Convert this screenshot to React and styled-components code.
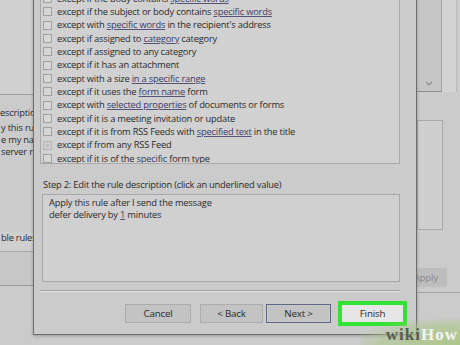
import styled, { createGlobalStyle } from "styled-components";

const GlobalStyle = createGlobalStyle`
  html, body {
    margin: 0;
    padding: 0;
  }
  body {
    width: 460px;
    height: 345px;
    overflow: hidden;
    background: #cbcbcb;
    font-family: "Open Sans", "Noto Sans", sans-serif;
    color: #2a2a2a;
  }
`;

const conditions = [
  ["except if the body contains ", { u: "specific words" }],
  ["except if the subject or body contains ", { u: "specific words" }],
  ["except with ", { u: "specific words" }, " in the recipient's address"],
  ["except if assigned to ", { u: "category" }, " category"],
  ["except if assigned to any category"],
  ["except if it has an attachment"],
  ["except with a size ", { u: "in a specific range" }],
  ["except if it uses the ", { u: "form name" }, " form"],
  ["except with ", { u: "selected properties" }, " of documents or forms"],
  ["except if it is a meeting invitation or update"],
  ["except if it is from RSS Feeds with ", { u: "specified text" }, " in the title"],
  ["except if from any RSS Feed"],
  ["except if it is of the ", { u: "specific" }, " form type"],
];

const App = () => {
  return (
    <>
      <GlobalStyle />
      <Desktop>
        <BackWindow>
          <LeftPane>
            <TopArea />
            <BackLabel>escription</BackLabel>
            <BackLines>
              <BackLine>y this rule after</BackLine>
              <BackLine>e my name</BackLine>
              <BackLine>server replies</BackLine>
            </BackLines>
            <EnableRow>ble rules</EnableRow>
            <ButtonBand />
          </LeftPane>
          <Middle />
          <RightPane>
            <TopRight>
              <ScrollTrack>
                <svg width="8" height="5" viewBox="0 0 8 5">
                  <path d="M1 1 L4 4 L7 1" fill="none" stroke="#8c8c8c" strokeWidth="1.1" />
                </svg>
              </ScrollTrack>
              <Strip />
            </TopRight>
            <SideBox />
            <ApplyButton>Apply</ApplyButton>
            <RightLine />
          </RightPane>
        </BackWindow>

        <Dialog>
          <ListBox>
            {conditions.map((parts, i) => (
              <Row key={i}>
                <Check $greyed={i === 11} />
                <RowText>
                  {parts.map((p, j) =>
                    typeof p === "string" ? p : <Link key={j}>{p.u}</Link>
                  )}
                </RowText>
              </Row>
            ))}
          </ListBox>
          <StepLabel>Step 2: Edit the rule description (click an underlined value)</StepLabel>
          <DescBox>
            <div>Apply this rule after I send the message</div>
            <div>
              defer delivery by <Link>1</Link> minutes
            </div>
          </DescBox>
          <Separator />
          <ButtonRow>
            <Button $w={66}>Cancel</Button>
            <Button $w={63} $ml={9}>&lt; Back</Button>
            <Button $w={65} $ml={3} $default>Next &gt;</Button>
            <FinishButton>Finish</FinishButton>
          </ButtonRow>
        </Dialog>

        <Watermark>
          <Wiki>wiki</Wiki>
          <How>How</How>
        </Watermark>
      </Desktop>
    </>
  );
};

const Desktop = styled.div`
  position: relative;
  width: 460px;
  height: 345px;
  overflow: hidden;
  background: #cbcbcb;
  font-size: 9.3px;
  letter-spacing: -0.2px;
`;

const BackWindow = styled.div`
  display: flex;
  height: 100%;
`;

const LeftPane = styled.div`
  width: 33px;
  display: flex;
  flex-direction: column;
  overflow: hidden;
  white-space: nowrap;
`;

const TopArea = styled.div`
  height: 94px;
  background: #d0d0d0;
  border-bottom: 1px solid #9d9d9d;
`;

const BackLabel = styled.div`
  margin-top: 12px;
  line-height: 12px;
  height: 12px;
`;

const BackLines = styled.div`
  margin-top: 3px;
  padding-left: 1px;
  line-height: 12px;
  height: 118px;
`;

const BackLine = styled.div`
  height: 12px;
`;

const EnableRow = styled.div`
  line-height: 12px;
  height: 12px;
  margin-top: -8px;
  padding-left: 1px;
  padding-bottom: 7px;
  border-bottom: 1px solid #a9a9a9;
  background: #cfcfcf;
`;

const ButtonBand = styled.div`
  height: 33px;
  background: #c7c7c7;
  border-bottom: 1px solid #9a9a9a;
`;

const Middle = styled.div`
  flex: 1;
`;

const RightPane = styled.div`
  width: 43px;
  display: flex;
  flex-direction: column;
`;

const TopRight = styled.div`
  display: flex;
  height: 92px;
`;

const ScrollTrack = styled.div`
  width: 25px;
  background: #c6c6c6;
  border-right: 1px solid #a3a3a3;
  border-bottom: 1px solid #8e8e8e;
  display: flex;
  align-items: flex-end;
  justify-content: center;
  padding-bottom: 5px;
  box-sizing: border-box;
`;

const Strip = styled.div`
  flex: 1;
  background: #d3d3d3;
  border-right: 1px solid #bdbdbd;
  margin-right: 3px;
`;

const SideBox = styled.div`
  margin-top: 28px;
  width: 24px;
  height: 108px;
  border: 1px solid #a9a9a9;
  background: #cfcfcf;
`;

const ApplyButton = styled.div`
  margin-top: 38px;
  width: 30px;
  height: 19px;
  background: #bdbdbd;
  border-radius: 0 2px 2px 0;
  color: #8a8a8a;
  display: flex;
  align-items: center;
  justify-content: flex-end;
  padding-right: 9px;
  box-sizing: border-box;
  overflow: hidden;
  white-space: nowrap;
  font-size: 9.8px;
`;

const RightLine = styled.div`
  margin-top: 5px;
  border-top: 1px solid #a3a3a3;
`;

const Dialog = styled.div`
  position: absolute;
  left: 33px;
  top: -12px;
  width: 384px;
  height: 347px;
  box-sizing: border-box;
  background: #cbcbcb;
  border: 1px solid #6c6c6c;
  border-top: none;
  box-shadow: 0 1px 3px rgba(0, 0, 0, 0.25);
  display: flex;
  flex-direction: column;
  padding: 0 16px 0 6px;
`;

const ListBox = styled.div`
  margin-top: 2px;
  height: 174px;
  box-sizing: border-box;
  border: 1px solid #a9a9a9;
  background: #d1d1d1;
  padding-top: 1px;
  overflow: hidden;
`;

const Row = styled.div`
  display: flex;
  align-items: center;
  height: 13.33px;
  white-space: nowrap;
`;

const Check = styled.span`
  width: 9px;
  height: 9px;
  margin-left: 2px;
  margin-right: 5px;
  box-sizing: border-box;
  border: 1px solid ${(p) => (p.$greyed ? "#b5b5b5" : "#a2a2a2")};
  background: ${(p) => (p.$greyed ? "#cdcdcd" : "#d6d6d6")};
  box-shadow: ${(p) => (p.$greyed ? "inset 0 0 0 2px #cdcdcd, inset 0 0 0 4px #bdbdbd" : "none")};
  flex-shrink: 0;
`;

const RowText = styled.span`
  line-height: 12px;
`;

const Link = styled.span`
  color: #3a3a68;
  text-decoration: underline;
  text-decoration-color: #55557a;
  text-underline-offset: 1px;
`;

const StepLabel = styled.div`
  margin-top: 15px;
  padding-left: 3px;
  line-height: 12px;
  height: 12px;
  white-space: nowrap;
`;

const DescBox = styled.div`
  margin-top: 3px;
  margin-left: 2px;
  height: 88px;
  box-sizing: border-box;
  border: 1px solid #a9a9a9;
  background: #d0d0d0;
  padding: 2px 6px;
  line-height: 12px;
`;

const Separator = styled.div`
  margin-top: 8px;
  border-top: 1px solid #a4a4a4;
  border-bottom: 1px solid #e2e2e2;
`;

const ButtonRow = styled.div`
  margin-top: 12px;
  height: 19px;
  display: flex;
  align-items: center;
  padding-left: 85px;
`;

const Button = styled.div`
  width: ${(p) => p.$w}px;
  margin-left: ${(p) => p.$ml || 0}px;
  flex-shrink: 0;
  height: 19px;
  box-sizing: border-box;
  display: flex;
  align-items: center;
  justify-content: center;
  background: #c3c3c3;
  border: 1px solid ${(p) => (p.$default ? "#5f6883" : "#adadad")};
  box-shadow: ${(p) => (p.$default ? "inset 0 0 0 1px #c9c9cc" : "none")};
  font-size: 9.8px;
  white-space: nowrap;
`;

const FinishButton = styled.div`
  margin-left: 7px;
  width: 69px;
  height: 25px;
  box-sizing: border-box;
  border: 4.5px solid #33e333;
  background: #e6e6e6;
  display: flex;
  align-items: center;
  justify-content: center;
  font-size: 9.8px;
  flex-shrink: 0;
`;

const Watermark = styled.div`
  position: absolute;
  right: 0;
  bottom: 0;
  width: 100px;
  height: 26px;
  display: flex;
  align-items: flex-end;
  justify-content: flex-end;
  padding: 0 2px 2px 0;
  box-sizing: border-box;
  background: radial-gradient(ellipse at 100% 100%, rgba(165, 198, 125, 0.8) 0%, rgba(172, 200, 138, 0.6) 55%, rgba(190, 205, 170, 0) 78%);
  font-family: "Liberation Serif", "DejaVu Serif", serif;
  font-weight: bold;
  font-size: 17px;
  letter-spacing: 1px;
  line-height: 17px;
`;

const Wiki = styled.span`
  color: #5a5a5a;
`;

const How = styled.span`
  color: #f3f3f3;
`;

export default App;
